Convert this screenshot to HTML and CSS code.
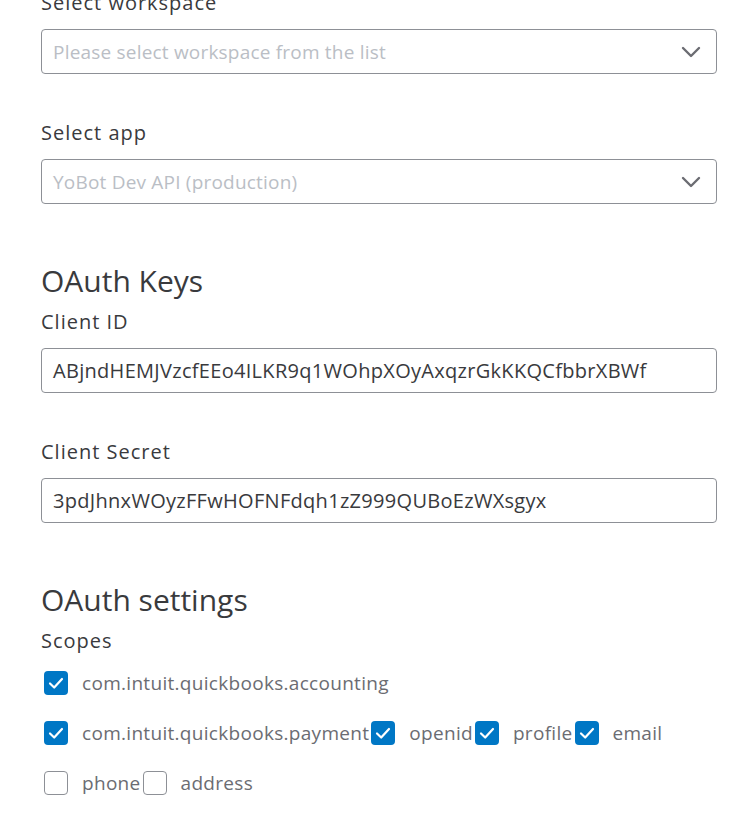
FILE: index.html
```html
<!DOCTYPE html>
<html>
<head>
<meta charset="utf-8">
<link rel="stylesheet" href="styles.css">
</head>
<body>
<div class="form">
  <div class="field">
    <div class="label">Select workspace</div>
    <div class="input select"><span class="placeholder">Please select workspace from the list</span>
      <svg class="chev" width="20" height="12" viewBox="0 0 20 12"><path d="M2 2 L10 10 L18 2" fill="none" stroke="#6b6c72" stroke-width="2.4" stroke-linecap="round" stroke-linejoin="round"/></svg>
    </div>
  </div>
  <div class="field">
    <div class="label">Select app</div>
    <div class="input select"><span class="placeholder">YoBot Dev API (production)</span>
      <svg class="chev" width="20" height="12" viewBox="0 0 20 12"><path d="M2 2 L10 10 L18 2" fill="none" stroke="#6b6c72" stroke-width="2.4" stroke-linecap="round" stroke-linejoin="round"/></svg>
    </div>
  </div>

  <h2 class="heading">OAuth Keys</h2>
  <div class="field">
    <div class="label">Client ID</div>
    <div class="input"><span class="value">ABjndHEMJVzcfEEo4ILKR9q1WOhpXOyAxqzrGkKKQCfbbrXBWf</span></div>
  </div>
  <div class="field">
    <div class="label">Client Secret</div>
    <div class="input"><span class="value">3pdJhnxWOyzFFwHOFNFdqh1zZ999QUBoEzWXsgyx</span></div>
  </div>

  <h2 class="heading">OAuth settings</h2>
  <div class="label">Scopes</div>
  <div class="scopes">
    <div class="row">
      <span class="cb on"><svg width="24" height="24" viewBox="0 0 24 24"><path d="M6 12.5 L10.2 16.5 L18 8" fill="none" stroke="#fff" stroke-width="2.2" stroke-linecap="round" stroke-linejoin="round"/></svg></span><span class="opt">com.intuit.quickbooks.accounting</span>
    </div>
    <div class="row">
      <span class="cb on"><svg width="24" height="24" viewBox="0 0 24 24"><path d="M6 12.5 L10.2 16.5 L18 8" fill="none" stroke="#fff" stroke-width="2.2" stroke-linecap="round" stroke-linejoin="round"/></svg></span><span class="opt">com.intuit.quickbooks.payment</span><span class="cb on"><svg width="24" height="24" viewBox="0 0 24 24"><path d="M6 12.5 L10.2 16.5 L18 8" fill="none" stroke="#fff" stroke-width="2.2" stroke-linecap="round" stroke-linejoin="round"/></svg></span><span class="opt">openid</span><span class="cb on"><svg width="24" height="24" viewBox="0 0 24 24"><path d="M6 12.5 L10.2 16.5 L18 8" fill="none" stroke="#fff" stroke-width="2.2" stroke-linecap="round" stroke-linejoin="round"/></svg></span><span class="opt">profile</span><span class="cb on"><svg width="24" height="24" viewBox="0 0 24 24"><path d="M6 12.5 L10.2 16.5 L18 8" fill="none" stroke="#fff" stroke-width="2.2" stroke-linecap="round" stroke-linejoin="round"/></svg></span><span class="opt">email</span>
    </div>
    <div class="row">
      <span class="cb"></span><span class="opt">phone</span><span class="cb"></span><span class="opt">address</span>
    </div>
  </div>
</div>
</body>
</html>
```

FILE: styles.css
```css
html, body {
  margin: 0;
  padding: 0;
  background: #fff;
  overflow: hidden;
}
body {
  font-family: "Open Sans", "Lato", sans-serif;
  color: #393a3d;
}
.form {
  margin: -11px 37px 0 41px;
  display: flex;
  flex-direction: column;
}
.field {
  display: flex;
  flex-direction: column;
  margin-bottom: 45px;
}
.label {
  font-size: 20px;
  line-height: 28px;
  font-weight: 500;
  letter-spacing: 1px;
  color: #393a3d;
  margin-bottom: 12px;
}
.input {
  box-sizing: border-box;
  height: 45px;
  border: 1px solid #8d9096;
  border-radius: 4px;
  display: flex;
  align-items: center;
  padding: 0 15px 0 11px;
  font-size: 20px;
  letter-spacing: 0.3px;
}
.select {
  justify-content: space-between;
}
.placeholder {
  color: #babec5;
  font-size: 19px;
  letter-spacing: 0.2px;
}
.value {
  color: #393a3d;
}
.chev {
  display: block;
}
.heading {
  margin: 12px 0 7px;
  font-size: 30px;
  line-height: 40px;
  font-weight: 400;
  color: #393a3d;
}
.scopes {
  margin-top: -9px;
  display: flex;
  flex-direction: column;
}
.row {
  height: 50px;
  display: flex;
  align-items: center;
  padding-left: 3px;
}
.cb {
  box-sizing: border-box;
  width: 24px;
  height: 24px;
  border-radius: 4px;
  border: 1px solid #8d9096;
  background: #fff;
  flex: none;
  display: block;
}
.cb svg {
  display: block;
}
.cb.on {
  background: #0077c5;
  border: none;
}
.opt {
  font-size: 19px;
  letter-spacing: 0.3px;
  color: #6b6c72;
  margin: 0 2px 0 14px;
}
```
